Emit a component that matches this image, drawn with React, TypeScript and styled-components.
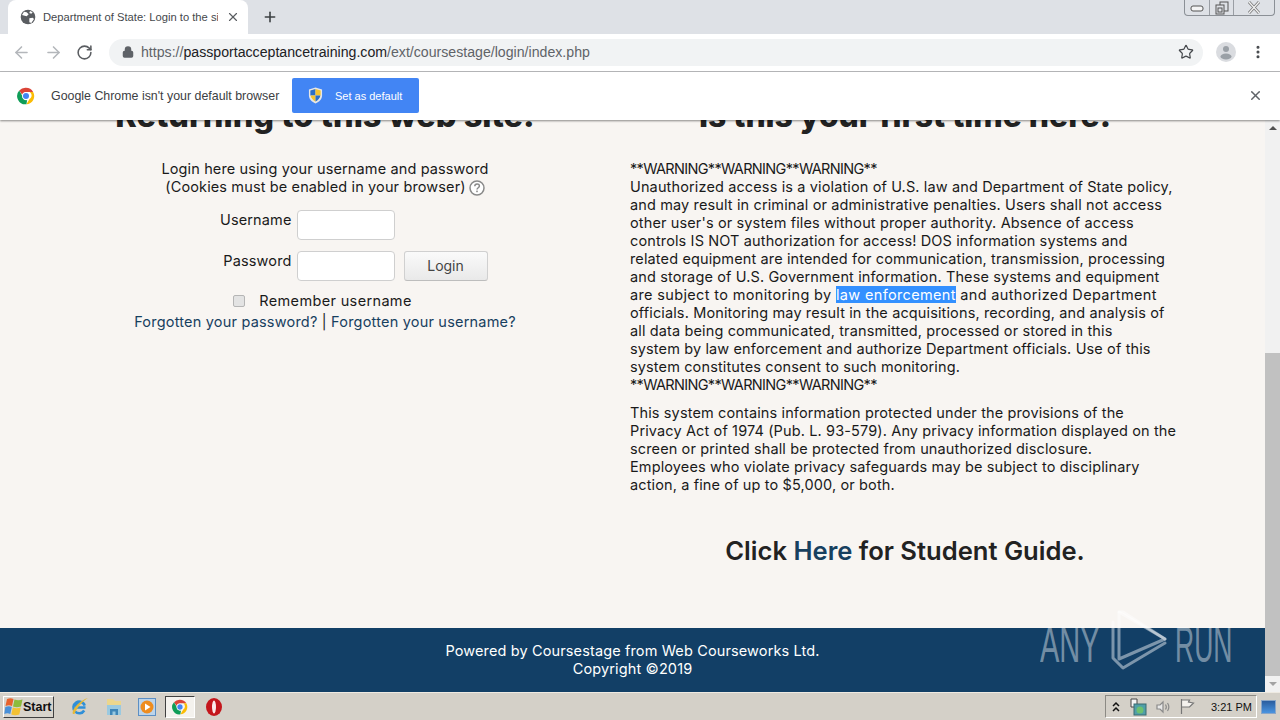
import styled, { createGlobalStyle } from "styled-components";
import { ArrowLeft, ArrowRight, RotateCw, Lock, Star, X, Plus, EllipsisVertical } from "lucide-react";

const GlobalStyle = createGlobalStyle`
  html, body {
    margin: 0;
    padding: 0;
    height: 100%;
    overflow: hidden;
  }
  * { box-sizing: border-box; }
`;

const Screen = styled.div`
  position: relative;
  width: 1280px;
  height: 720px;
  display: flex;
  flex-direction: column;
  overflow: hidden;
  font-family: "Liberation Sans", Arial, sans-serif;
`;

/* browser chrome */
const TabStrip = styled.div`
  height: 34px;
  flex: none;
  display: flex;
  background: #dee1e6;
  padding-left: 8px;
`;

const Tab = styled.div`
  width: 240px;
  height: 34px;
  background: #fff;
  border-radius: 8px 8px 0 0;
  display: flex;
  align-items: center;
  padding-left: 12px;
  color: #45484c;
  font-size: 11.2px;
`;

const TabTitle = styled.span`
  margin-left: 7px;
  width: 175px;
  white-space: nowrap;
  overflow: hidden;
`;

const TabClose = styled.span`
  display: flex;
  margin-left: 8px;
  color: #5a5d61;
`;

const NewTab = styled.span`
  display: flex;
  margin: 9px 0 0 14px;
  color: #3c4043;
`;

const WindowButtons = styled.div`
  margin-left: auto;
  margin-right: 5px;
  width: 91px;
  height: 16px;
  display: flex;
  border: 1px solid #8b9096;
  border-top: 0;
  border-radius: 0 0 4px 4px;
`;

const WindowButton = styled.div<{ $width: number }>`
  width: ${(p) => p.$width}px;
  flex: none;
  display: flex;
  align-items: center;
  justify-content: center;
  border-right: 1px solid #9a9ea4;
  &:last-child { border-right: 0; }
`;

const Toolbar = styled.div`
  height: 38px;
  flex: none;
  display: flex;
  align-items: center;
  background: #fff;
  border-bottom: 1px solid #b9babc;
  padding: 0 0 1px 12px;
`;

const NavIcon = styled.span<{ $color: string }>`
  display: flex;
  width: 32px;
  color: ${(p) => p.$color};
`;

const Omnibox = styled.div`
  margin-left: 1px;
  width: 1094px;
  height: 27px;
  border-radius: 14px;
  background: #f1f3f4;
  display: flex;
  align-items: center;
  padding-left: 13px;
  color: #5f6368;
  font-size: 14.15px;
`;

const Url = styled.span`
  margin-left: 7px;
  white-space: nowrap;
`;

const UrlHost = styled.span`
  color: #202124;
`;

const StarIcon = styled.span`
  display: flex;
  margin-left: auto;
  margin-right: 9px;
  color: #45484c;
`;

const ToolbarEnd = styled.div`
  display: flex;
  align-items: center;
  margin-left: 13px;
  color: #45484c;
`;

const MenuDots = styled.span`
  display: flex;
  margin-left: 14px;
`;

const InfoBar = styled.div`
  height: 48px;
  flex: none;
  display: flex;
  align-items: center;
  background: #fff;
  padding: 0 0 1px 17px;
  box-shadow: 0 1px 2px rgba(0, 0, 0, 0.45);
  position: relative;
  z-index: 2;
`;

const InfoText = styled.span`
  margin-left: 16px;
  font-size: 12.4px;
  color: #3c4043;
  width: 241px;
  white-space: nowrap;
`;

const DefaultButton = styled.div`
  width: 127px;
  height: 35px;
  background: #4285f4;
  border-radius: 2px;
  display: flex;
  align-items: center;
  padding-left: 16px;
  color: #fff;
  font-size: 11px;
`;

const DefaultLabel = styled.span`
  margin-left: 12px;
`;

const InfoClose = styled.span`
  display: flex;
  margin-left: auto;
  margin-right: 17px;
  color: #5f6368;
`;

/* page */
const Viewport = styled.div`
  flex: 1;
  min-height: 0;
  display: flex;
`;

const Main = styled.div`
  flex: 1;
  display: flex;
  flex-direction: column;
  min-width: 0;
  overflow: hidden;
`;

const Page = styled.div`
  flex: 1;
  background: #f8f5f2;
  color: #1a1a1a;
  font-family: Inter, "Liberation Sans", sans-serif;
  font-size: 14.5px;
  letter-spacing: 0.13px;
  line-height: 18px;
  display: grid;
  grid-template-columns: 630px 550px;
  align-content: start;
  overflow: hidden;
`;

const Column = styled.div<{ $left?: boolean }>`
  margin-top: -22px;
  padding-left: ${(p) => (p.$left ? "20px" : "0")};
  display: flex;
  flex-direction: column;
  align-items: ${(p) => (p.$left ? "center" : "stretch")};
`;

const Heading = styled.h2<{ $size: number }>`
  margin: 0 0 26px;
  font-size: ${(p) => p.$size}px;
  line-height: 36px;
  font-weight: 800;
  letter-spacing: 0;
  color: #222;
  text-align: center;
  white-space: nowrap;
`;

const LoginIntro = styled.div`
  text-align: center;
  white-space: nowrap;
`;

const HelpIcon = styled.span`
  display: inline-flex;
  vertical-align: -4px;
  margin-left: 3px;
`;

const FormGrid = styled.div`
  margin-top: 14px;
  margin-left: 27px;
  display: grid;
  grid-template-columns: 98px 98px 84px;
  row-gap: 11px;
`;

const FieldLabel = styled.label`
  padding-right: 5px;
  padding-top: 1px;
  text-align: right;
  white-space: nowrap;
  justify-self: end;
`;

const Field = styled.div`
  width: 98px;
  height: 30px;
  background: #fff;
  border: 1px solid #cfcfcf;
  border-radius: 4px;
`;

const LoginButton = styled.div`
  margin-left: 9px;
  width: 84px;
  height: 30px;
  border: 1px solid #d0d0d0;
  border-bottom-color: #bdbdbd;
  border-radius: 3px;
  background: linear-gradient(#fafafa, #e9e9e9);
  color: #444;
  font-size: 14px;
  letter-spacing: 0;
  display: flex;
  align-items: center;
  justify-content: center;
`;

const RememberRow = styled.div`
  margin-top: 11px;
  margin-left: -5px;
  display: flex;
  align-items: center;
  white-space: nowrap;
  letter-spacing: 0.35px;
`;

const CheckBox = styled.span`
  width: 12px;
  height: 12px;
  margin-right: 14px;
  background: #e3e3e3;
  border: 1px solid #b5b5b5;
  border-radius: 2px;
`;

const Links = styled.div`
  margin-top: 3px;
  color: #17405f;
  white-space: nowrap;
  letter-spacing: 0.2px;
`;

const Bar = styled.span`
  color: #1a1a1a;
`;

const Paragraph = styled.div`
  margin-bottom: 10px;
`;

const Line = styled.div`
  white-space: nowrap;
`;

const WarningLine = styled.div`
  white-space: nowrap;
  letter-spacing: -0.67px;
`;

const SelectionLine = styled.div`
  white-space: nowrap;
  letter-spacing: 0.35px;
`;

const Selected = styled.span`
  background: #3390ff;
  color: #fff;
`;

const GuideLine = styled.div`
  margin-top: 32px;
  text-align: center;
  font-size: 25.6px;
  line-height: 30px;
  font-weight: 600;
  letter-spacing: 0;
  color: #222;
`;

const GuideLink = styled.span`
  color: #17405f;
`;

const Footer = styled.div`
  height: 64px;
  flex: none;
  background: #123f66;
  color: #fff;
  font-family: Inter, "Liberation Sans", sans-serif;
  font-size: 14.5px;
  letter-spacing: 0.13px;
  line-height: 18px;
  text-align: center;
  padding-top: 14px;
`;

const Scrollbar = styled.div`
  width: 15px;
  flex: none;
  background: #f1f1f1;
  display: flex;
  flex-direction: column;
`;

const ScrollArrow = styled.div<{ $down?: boolean }>`
  height: 16px;
  flex: none;
  display: flex;
  align-items: center;
  justify-content: center;
  &::before {
    content: "";
    border-left: 4px solid transparent;
    border-right: 4px solid transparent;
    ${(p) => (p.$down ? "border-top: 4px solid #a3a3a3;" : "border-bottom: 4px solid #505050;")}
  }
`;

const ScrollTrack = styled.div`
  flex: 1;
  display: flex;
  flex-direction: column;
  justify-content: flex-end;
`;

const ScrollThumb = styled.div`
  height: 323px;
  background: #c1c1c1;
`;

/* watermark */
const Watermark = styled.div`
  position: absolute;
  left: 1040px;
  top: 608px;
  display: flex;
  align-items: center;
  height: 64px;
  color: rgba(255, 255, 255, 0.42);
  font-family: "Liberation Sans", sans-serif;
  font-size: 50px;
  pointer-events: none;
`;

const MarkWord = styled.span<{ $width: number; $scale: number }>`
  display: block;
  width: ${(p) => p.$width}px;
  transform: scaleX(${(p) => p.$scale});
  transform-origin: left center;
  white-space: nowrap;
  margin-top: 9px;
`;

/* taskbar */
const Taskbar = styled.div`
  height: 28px;
  flex: none;
  background: #d4d0c8;
  border-top: 1px solid #eeeae2;
  display: flex;
  align-items: center;
  padding-left: 3px;
`;

const StartButton = styled.div`
  width: 51px;
  height: 22px;
  display: flex;
  align-items: center;
  background: #d8d4cc;
  border: 1px solid;
  border-color: #fff #404040 #404040 #fff;
  font-size: 12.5px;
  font-weight: 700;
  color: #111;
`;

const Launch = styled.div`
  margin-left: 10px;
  display: flex;
  align-items: center;
`;

const LaunchSlot = styled.div<{ $active?: boolean }>`
  width: ${(p) => (p.$active ? "30px" : "33px")};
  height: 22px;
  display: flex;
  align-items: center;
  justify-content: center;
  ${(p) =>
    p.$active &&
    "margin: 0 2px; background: #f4f2ee; border: 1px solid; border-color: #404040 #fff #fff #404040;"}
`;

const Tray = styled.div`
  margin-left: auto;
  margin-right: 4px;
  width: 152px;
  height: 23px;
  display: flex;
  align-items: center;
  gap: 8px;
  padding-left: 5px;
  border: 1px solid;
  border-color: #8c8a84 #fff #fff #8c8a84;
  font-size: 11px;
  color: #111;
`;

const Clock = styled.span`
  margin-left: 8px;
  white-space: nowrap;
`;

const ShowDesktop = styled.div`
  width: 15px;
  height: 14px;
  margin-right: 4px;
  background: linear-gradient(#2a5d9e, #4a94e0);
  border: 1px solid #8aa6c8;
`;

function ChromeLogo({ size }: { size: number }) {
  return (
    <svg width={size} height={size} viewBox="0 0 24 24">
      <path d="M12 1a11 11 0 0 1 9.500 5.500H12a5.500 5.500 0 0 0-5.200 3.700L3 4.800A11 11 0 0 1 12 1z" fill="#db4437" />
      <path d="M21.500 6.500A11 11 0 0 1 12.600 23l4.100-7a5.500 5.500 0 0 0 .1-9.500z" fill="#fbbc05" />
      <path d="M3 4.800l3.900 6.900a5.500 5.500 0 0 0 6.600 5.700L12.600 23A11 11 0 0 1 3 4.800z" fill="#0f9d58" />
      <circle cx="12" cy="12" r="5" fill="#fff" />
      <circle cx="12" cy="12" r="4" fill="#4285f4" />
    </svg>
  );
}

function GlobeIcon() {
  return (
    <svg width="16" height="16" viewBox="0 0 24 24">
      <circle cx="12" cy="12" r="11" fill="#5a5d61" />
      <path d="M6 4l4 1 3 3-3 3-3-1-4-1zM14 14l5-1 2 2-4 6-3-1zM15 3l4 2-2 2-3-1z" fill="#fff" />
    </svg>
  );
}

function ShieldIcon() {
  return (
    <svg width="15" height="17" viewBox="0 0 16 18">
      <path d="M8 0.500l7 2.200v6c0 4.200-3 7-7 8.800-4-1.800-7-4.600-7-8.800v-6z" fill="#e7e7e7" />
      <path d="M8 2L2.500 3.700V9H8z" fill="#2a6fc9" />
      <path d="M8 2l5.500 1.700V9H8z" fill="#f4c430" />
      <path d="M8 9H2.800c.5 3 2.600 5 5.200 6.400z" fill="#f4c430" />
      <path d="M8 9h5.200c-.5 3-2.600 5-5.200 6.400z" fill="#2a6fc9" />
    </svg>
  );
}

function WindowsFlag() {
  return (
    <svg width="19" height="19" viewBox="0 0 19 19">
      <path d="M3 2c2.500-1 4.500-1 6.500 0L8 9C6 8 4 8 1.500 9z" fill="#e8622c" />
      <path d="M10.500 2.500c2.500 1 5 1 8 0L17 9.500c-3 1-5.500 1-8 0z" fill="#8dbb3c" />
      <path d="M1.300 10c2.500-1 4.500-1 6.500 0l-1.500 7c-2-1-4-1-6 0z" fill="#4a90d8" />
      <path d="M8.800 10.500c2.500 1 5 1 8 0L15.300 17.500c-3 1-5.500 1-8 0z" fill="#f3c132" />
    </svg>
  );
}

function IeIcon() {
  return (
    <svg width="19" height="19" viewBox="0 0 19 19">
      <path d="M14.500 10.500H5.500a4.200 4.200 0 0 1 8.200-2 5.800 5.800 0 1 0-.5 5" fill="none" stroke="#2f8fd8" strokeWidth="2.600" />
      <path d="M2 17C0 13 9 3 17 1c-4 2.500-11 9-13.500 16z" fill="#e5b93a" />
    </svg>
  );
}

function FolderIcon() {
  return (
    <svg width="18" height="20" viewBox="0 0 18 20">
      <path d="M2 2h6l2 2h6v14H2z" fill="#ecd68c" />
      <path d="M2 8h14v10H2z" fill="#9ac9e0" />
      <path d="M5 18v-6h8v6h-2.500v-3.500h-3V18z" fill="#3f86b8" />
    </svg>
  );
}

function MediaIcon() {
  return (
    <svg width="18" height="18" viewBox="0 0 18 18">
      <rect x="0.500" y="0.500" width="17" height="17" fill="#bcd4ea" stroke="#5c8fc4" />
      <circle cx="9" cy="9" r="6.500" fill="#ee8c1e" />
      <path d="M7 5.500l5.500 3.500L7 12.500z" fill="#fff" />
    </svg>
  );
}

function OperaIcon() {
  return (
    <svg width="16" height="18" viewBox="0 0 16 18">
      <ellipse cx="8" cy="9" rx="8" ry="9" fill="#c4161c" />
      <ellipse cx="8" cy="9" rx="2" ry="6.500" fill="#fbeaea" />
    </svg>
  );
}

function AvatarIcon() {
  return (
    <svg width="20" height="20" viewBox="0 0 20 20">
      <circle cx="10" cy="10" r="10" fill="#dadce0" />
      <circle cx="10" cy="7" r="3" fill="#9aa0a6" />
      <ellipse cx="10" cy="14.500" rx="5.500" ry="3" fill="#9aa0a6" />
    </svg>
  );
}

function QuestionIcon() {
  return (
    <svg width="16" height="16" viewBox="0 0 16 16">
      <circle cx="8" cy="8" r="7" fill="#fff" stroke="#8a8a8a" strokeWidth="1.500" />
      <path d="M5.800 6.200c0-3 4.600-3 4.600-.2 0 1.700-2.400 1.800-2.400 3.500" fill="none" stroke="#8a8a8a" strokeWidth="1.500" />
      <rect x="7.200" y="10.600" width="1.600" height="1.600" fill="#8a8a8a" />
    </svg>
  );
}

function PlayMark() {
  return (
    <svg
      width="67"
      height="64"
      viewBox="0 0 67 64"
      fill="none"
      stroke="rgba(255,255,255,0.45)"
      strokeWidth="3"
      strokeLinejoin="round"
      strokeLinecap="round"
    >
      <path d="M5 14v36l10 10 42-25" />
      <path d="M11 4v47l46-20z" />
      <path d="M11 4h4l42 27" />
    </svg>
  );
}

const firstParagraph = [
  "Unauthorized access is a violation of U.S. law and Department of State policy,",
  "and may result in criminal or administrative penalties. Users shall not access",
  "other user's or system files without proper authority. Absence of access",
  "controls IS NOT authorization for access! DOS information systems and",
  "related equipment are intended for communication, transmission, processing",
  "and storage of U.S. Government information. These systems and equipment",
];

const firstParagraphEnd = [
  "officials. Monitoring may result in the acquisitions, recording, and analysis of",
  "all data being communicated, transmitted, processed or stored in this",
  "system by law enforcement and authorize Department officials. Use of this",
  "system constitutes consent to such monitoring.",
];

const secondParagraph = [
  "This system contains information protected under the provisions of the",
  "Privacy Act of 1974 (Pub. L. 93-579). Any privacy information displayed on the",
  "screen or printed shall be protected from unauthorized disclosure.",
  "Employees who violate privacy safeguards may be subject to disciplinary",
  "action, a fine of up to $5,000, or both.",
];

function App() {
  return (
    <Screen>
      <GlobalStyle />
      <TabStrip>
        <Tab>
          <GlobeIcon />
          <TabTitle>Department of State: Login to the si</TabTitle>
          <TabClose>
            <X size={14} strokeWidth={2} />
          </TabClose>
        </Tab>
        <NewTab>
          <Plus size={16} strokeWidth={2.4} />
        </NewTab>
        <WindowButtons>
          <WindowButton $width={25}>
            <svg width="14" height="8" viewBox="0 0 14 8">
              <rect x="1" y="2" width="12" height="5" rx="2" fill="#f4f4f4" stroke="#555" />
            </svg>
          </WindowButton>
          <WindowButton $width={24}>
            <svg width="14" height="14" viewBox="0 0 14 14">
              <rect x="5" y="1" width="8" height="9" fill="none" stroke="#555" />
              <rect x="1" y="4" width="8" height="9" fill="#dee1e6" stroke="#555" />
              <rect x="3" y="7" width="4" height="4" fill="none" stroke="#555" />
            </svg>
          </WindowButton>
          <WindowButton $width={40}>
            <svg width="14" height="13" viewBox="0 0 14 13">
              <path d="M2 1l10 11M12 1L2 12" stroke="#777" strokeWidth="2.800" />
              <path d="M2 1l10 11M12 1L2 12" stroke="#f2f2f2" strokeWidth="1.200" />
            </svg>
          </WindowButton>
        </WindowButtons>
      </TabStrip>
      <Toolbar>
        <NavIcon $color="#b4b7bb">
          <ArrowLeft size={19} strokeWidth={2} />
        </NavIcon>
        <NavIcon $color="#b4b7bb">
          <ArrowRight size={19} strokeWidth={2} />
        </NavIcon>
        <NavIcon $color="#5a5d61">
          <RotateCw size={17} strokeWidth={2.2} />
        </NavIcon>
        <Omnibox>
          <Lock size={12} strokeWidth={3} fill="#5f6368" />
          <Url>
            https://<UrlHost>passportacceptancetraining.com</UrlHost>/ext/coursestage/login/index.php
          </Url>
          <StarIcon>
            <Star size={16} strokeWidth={1.8} />
          </StarIcon>
        </Omnibox>
        <ToolbarEnd>
          <AvatarIcon />
          <MenuDots>
            <EllipsisVertical size={16} strokeWidth={2.6} />
          </MenuDots>
        </ToolbarEnd>
      </Toolbar>
      <InfoBar>
        <ChromeLogo size={18} />
        <InfoText>Google Chrome isn't your default browser</InfoText>
        <DefaultButton>
          <ShieldIcon />
          <DefaultLabel>Set as default</DefaultLabel>
        </DefaultButton>
        <InfoClose>
          <X size={15} strokeWidth={2.4} />
        </InfoClose>
      </InfoBar>
      <Viewport>
        <Main>
          <Page>
            <Column $left>
              <Heading $size={32.5}>Returning to this web site!</Heading>
              <LoginIntro>
                Login here using your username and password
                <br />
                (Cookies must be enabled in your browser)
                <HelpIcon>
                  <QuestionIcon />
                </HelpIcon>
              </LoginIntro>
              <FormGrid>
                <FieldLabel>Username</FieldLabel>
                <Field />
                <span />
                <FieldLabel>Password</FieldLabel>
                <Field />
                <LoginButton>Login</LoginButton>
              </FormGrid>
              <RememberRow>
                <CheckBox />
                Remember username
              </RememberRow>
              <Links>
                Forgotten your password? <Bar>|</Bar> Forgotten your username?
              </Links>
            </Column>
            <Column>
              <Heading $size={31.8}>Is this your first time here!</Heading>
              <Paragraph>
                <WarningLine>**WARNING**WARNING**WARNING**</WarningLine>
                {firstParagraph.map((line) => (
                  <Line key={line}>{line}</Line>
                ))}
                <SelectionLine>
                  are subject to monitoring by <Selected>law enforcement</Selected> and authorized Department
                </SelectionLine>
                {firstParagraphEnd.map((line) => (
                  <Line key={line}>{line}</Line>
                ))}
                <WarningLine>**WARNING**WARNING**WARNING**</WarningLine>
              </Paragraph>
              <Paragraph>
                {secondParagraph.map((line) => (
                  <Line key={line}>{line}</Line>
                ))}
              </Paragraph>
              <GuideLine>
                Click <GuideLink>Here</GuideLink> for Student Guide.
              </GuideLine>
            </Column>
          </Page>
          <Footer>
            Powered by Coursestage from Web Courseworks Ltd.
            <br />
            Copyright ©2019
          </Footer>
        </Main>
        <Scrollbar>
          <ScrollArrow />
          <ScrollTrack>
            <ScrollThumb />
          </ScrollTrack>
          <ScrollArrow $down />
        </Scrollbar>
      </Viewport>
      <Taskbar>
        <StartButton>
          <WindowsFlag />
          Start
        </StartButton>
        <Launch>
          <LaunchSlot>
            <IeIcon />
          </LaunchSlot>
          <LaunchSlot>
            <FolderIcon />
          </LaunchSlot>
          <LaunchSlot>
            <MediaIcon />
          </LaunchSlot>
          <LaunchSlot $active>
            <ChromeLogo size={16} />
          </LaunchSlot>
          <LaunchSlot>
            <OperaIcon />
          </LaunchSlot>
        </Launch>
        <Tray>
          <svg width="10" height="12" viewBox="0 0 10 12" fill="none" stroke="#111" strokeWidth="1.500">
            <path d="M2 5l3-3 3 3M2 10l3-3 3 3" />
          </svg>
          <svg width="18" height="18" viewBox="0 0 18 18">
            <path d="M2 1h6v8H2z" fill="#f4f4f4" stroke="#444" />
            <rect x="5" y="6" width="12" height="11" fill="#4f9fa8" stroke="#3a6a70" />
            <circle cx="11" cy="12" r="3.500" fill="#6cc070" />
          </svg>
          <svg width="16" height="16" viewBox="0 0 16 16" fill="#e8e8e8" stroke="#8a8a8a" strokeWidth="1.200">
            <path d="M2 6h3l3-3v10l-3-3H2z" />
            <path d="M10.500 5.500c1 1.500 1 3.500 0 5M12.500 4c1.700 2.500 1.700 5.500 0 8" fill="none" />
          </svg>
          <svg width="16" height="17" viewBox="0 0 16 17" fill="#f4f2ee" stroke="#777" strokeWidth="1.200">
            <path d="M2.500 1v15M2.500 2h8l-1 2 5 1-4 4h-8" />
          </svg>
          <Clock>3:21 PM</Clock>
        </Tray>
        <ShowDesktop />
      </Taskbar>
      <Watermark>
        <MarkWord $width={68} $scale={0.58}>ANY</MarkWord>
        <PlayMark />
        <MarkWord $width={55} $scale={0.53}>RUN</MarkWord>
      </Watermark>
    </Screen>
  );
}

export default App;
